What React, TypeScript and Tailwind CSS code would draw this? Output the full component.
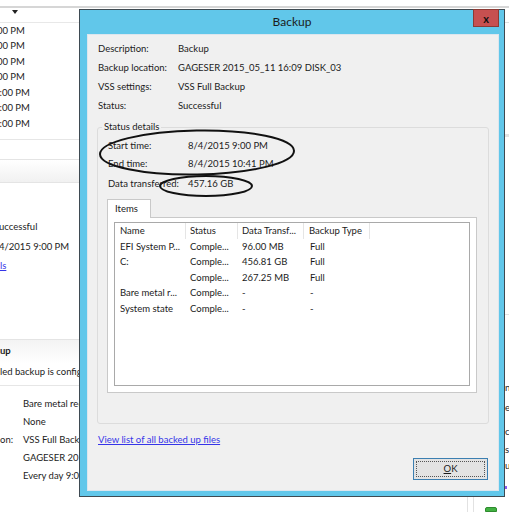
import React from "react";

const rows = [
  { name: "EFI System P...", status: "Comple...", data: "96.00 MB", type: "Full" },
  { name: "C:", status: "Comple...", data: "456.81 GB", type: "Full" },
  { name: "", status: "Comple...", data: "267.25 MB", type: "Full" },
  { name: "Bare metal r...", status: "Comple...", data: "-", type: "-" },
  { name: "System state", status: "Comple...", data: "-", type: "-" },
];

function Info({ label, value }: { label: string; value: string }) {
  return (
    <div className="flex h-[19px] items-center whitespace-nowrap">
      <span className="w-[80px] shrink-0">{label}</span>
      <span>{value}</span>
    </div>
  );
}

function Detail({ label, value, className = "" }: { label: string; value: string; className?: string }) {
  return (
    <div className={`flex h-[18px] items-center whitespace-nowrap pl-[1px] ${className}`}>
      <span className="w-[80px] shrink-0">{label}</span>
      <span>{value}</span>
    </div>
  );
}

export default function App() {
  return (
    <div className="relative flex h-[512px] w-[509px] flex-col overflow-hidden bg-white font-['Segoe_UI','Lato',sans-serif] text-[9.5px] text-[#1b1b1b]">
      {/* window behind */}
      <div className="h-[6px] shrink-0" />
      <div className="h-[2px] shrink-0 bg-[#d6d6d6]" />
      <div className="flex flex-1">
        {/* left strip */}
        <div className="flex w-[79px] shrink-0 flex-col overflow-hidden whitespace-nowrap">
          <div className="h-[15px] shrink-0 border-b border-[#e8e8e8] pl-[12px] pt-[2px]">
            <svg width="6" height="4" viewBox="0 0 6 4">
              <path d="M0 0h6L3 4z" fill="#222" />
            </svg>
          </div>
          {[11, 11, 11, 11, 6, 6, 6].map((o, i) => (
            <div key={i} className="flex h-[15.5px] shrink-0 items-center">
              <span className={o === 11 ? "ml-[-11px]" : "ml-[-6px]"}>9:00 PM</span>
            </div>
          ))}
          <div className="h-[8px] shrink-0 border-b border-[#e6e6e6]" />
          <div className="h-[19px] shrink-0" />
          <div className="h-[24px] shrink-0 border-y border-[#e4e4e4] bg-gradient-to-b from-white to-[#f1f1f1]" />
          <div className="h-[35px] shrink-0" />
          <div className="flex h-[19.5px] shrink-0 items-center">
            <span className="ml-[-6px]">Successful</span>
          </div>
          <div className="flex h-[19.5px] shrink-0 items-center">
            <span className="ml-[-1px]">4/2015 9:00 PM</span>
          </div>
          <div className="flex h-[19.5px] shrink-0 items-center">
            <span className="text-[#3535e8] underline">ls</span>
          </div>
          <div className="h-[63px] shrink-0" />
          <div className="flex h-[24px] shrink-0 items-center border-t border-[#e4e4e4] bg-gradient-to-b from-[#f3f3f3] to-white font-bold">
            up
          </div>
          <div className="flex h-[18px] shrink-0 items-center">led backup is configured</div>
          <div className="h-[5px] shrink-0 border-b border-[#e6e6e6]" />
          <div className="h-[9px] shrink-0" />
          {[
            ["", "Bare metal recovery"],
            ["", "None"],
            ["on:", "VSS Full Backup"],
            ["", "GAGESER 2015_05_11"],
            ["", "Every day 9:00 PM"],
          ].map(([l, v], i) => (
            <div key={i} className="flex h-[18px] shrink-0 items-center">
              <span className="w-[23px] shrink-0">{l}</span>
              <span>{v}</span>
            </div>
          ))}
        </div>

        {/* middle, mostly covered */}
        <div className="flex w-[426px] shrink-0 flex-col justify-end">
          <div className="flex h-[15px] items-end">
            <div className="ml-[388px] h-full w-px bg-[#e2e2e2]" />
            <div className="ml-[5px] h-full w-px bg-[#e2e2e2]" />
            <div className="ml-[11px] h-[5px] w-[12px] rounded-t-[2px] border border-[#2e8b2e] bg-[#42b142]" />
          </div>
        </div>

        {/* right strip */}
        <div className="flex flex-1 flex-col overflow-hidden whitespace-nowrap">
          <div className="h-[15px] shrink-0 border-b border-[#e0e0e0]" />
          <div className="h-[114px] shrink-0 border-b-[3px] border-[#e4e4e4]" />
          <div className="h-[178px] shrink-0 border-b border-[#e4e4e4]" />
          <div className="h-[64px] shrink-0" />
          <div className="flex h-[19px] shrink-0 items-center">n</div>
          <div className="flex h-[20px] shrink-0 items-center">e</div>
          <div className="h-[5px] shrink-0" />
          <div className="flex h-[18px] shrink-0 items-center">c</div>
          <div className="flex h-[18px] shrink-0 items-center">s</div>
          <div className="flex h-[14px] shrink-0 items-center">u</div>
          <div className="mt-[13px] h-[3px] w-[2px] shrink-0 bg-[#8a5cf0]" />
        </div>
      </div>

      {/* Backup dialog */}
      <div className="absolute left-[79px] top-[9px] flex h-[488px] w-[426px] flex-col border border-[#3e4a52] bg-[#61c7ea]">
        <div className="relative flex h-[24px] shrink-0 items-center justify-center text-[12px] text-[#1c1c1c]">
          Backup
          <div className="absolute right-[5px] top-[-1px] flex h-[18px] w-[26px] items-center justify-center border border-[#8c3a34] bg-[#c75050] text-[11px] font-bold leading-none text-[#111]">
            x
          </div>
        </div>
        <div className="mb-[5px] ml-[7px] mr-[5px] flex flex-1 flex-col border border-[#dce6ee] bg-[#f0f0f0]">
          <div className="pl-[10px] pt-[5px]">
            <Info label="Description:" value="Backup" />
            <Info label="Backup location:" value="GAGESER 2015_05_11 16:09 DISK_03" />
            <Info label="VSS settings:" value="VSS Full Backup" />
            <Info label="Status:" value="Successful" />
          </div>

          <fieldset className="ml-[9px] mt-[4px] w-[392px] rounded-[3px] border border-[#dcdcdc]">
            <legend className="ml-[4px] px-[2px] leading-[14px]">Status details</legend>
            <div className="pb-[30px] pl-[9px] pt-[3px]">
              <Detail label="Start time:" value="8/4/2015 9:00 PM" />
              <Detail label="End time:" value="8/4/2015 10:41 PM" />
              <Detail label="Data transferred:" value="457.16 GB" className="mt-[2px]" />

              <div className="mt-[6px] flex">
                <div className="relative z-10 mb-[-1px] flex h-[19px] w-[44px] items-center border-x border-t border-[#c9c9c9] bg-white pl-[7px]">
                  Items
                </div>
              </div>
              <div className="w-[370px] border border-[#c9c9c9] bg-white pb-[6px] pl-[6px] pt-[4px]">
                <div className="h-[164px] w-[356px] border border-[#a9a9a9] bg-white">
                  <div className="flex h-[16px] items-center whitespace-nowrap">
                    <div className="flex h-full w-[71px] items-center border-r border-[#e5e5e5] pl-[5px]">Name</div>
                    <div className="flex h-full w-[52px] items-center border-r border-[#e5e5e5] pl-[4px]">Status</div>
                    <div className="flex h-full w-[66px] items-center border-r border-[#e5e5e5] pl-[4px]">Data Transf...</div>
                    <div className="flex h-full w-[66px] items-center border-r border-[#e5e5e5] pl-[5px]">Backup Type</div>
                  </div>
                  {rows.map((r, i) => (
                    <div key={i} className="flex h-[15.5px] items-center whitespace-nowrap">
                      <div className="w-[71px] pl-[5px]">{r.name}</div>
                      <div className="w-[52px] pl-[4px]">{r.status}</div>
                      <div className="w-[66px] pl-[4px]">{r.data}</div>
                      <div className="w-[66px] pl-[6px]">{r.type}</div>
                    </div>
                  ))}
                </div>
              </div>
            </div>
          </fieldset>

          <div className="ml-[10px] mt-[8px] flex h-[16px] items-center">
            <span className="text-[#3535e8] underline">View list of all backed up files</span>
          </div>

          <div className="mr-[10px] mt-[10px] flex justify-end">
            <div className="flex h-[22px] w-[75px] items-center justify-center border border-[#3c7fb1] bg-[#e3e3e3] p-[2px]">
              <div className="flex h-full w-full items-center justify-center border border-dotted border-[#555]">
                <span>
                  <span className="underline">O</span>K
                </span>
              </div>
            </div>
          </div>
        </div>
      </div>

      {/* hand-drawn marks */}
      <svg className="pointer-events-none absolute left-0 top-0" width="509" height="512" viewBox="0 0 509 512">
        <ellipse cx="197" cy="152.5" rx="97" ry="22" fill="none" stroke="#111" strokeWidth="2" transform="rotate(-1 197 152.5)" />
        <ellipse cx="206" cy="186" rx="46" ry="10" fill="none" stroke="#111" strokeWidth="2" />
      </svg>
    </div>
  );
}
